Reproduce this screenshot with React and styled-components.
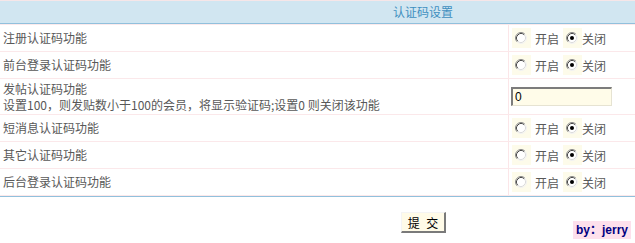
import React from 'react';
import styled, { createGlobalStyle } from 'styled-components';

const GlobalStyle = createGlobalStyle`
  body {
    margin: 0;
    background: #ffffff;
    font-family: "Noto Sans CJK SC", "Liberation Sans", sans-serif;
    font-size: 12px;
    color: #585858;
  }
`;

const Table = styled.div`
  width: 635px;
  border-top: 1px solid #f6e6e8;
`;

const Header = styled.div`
  height: 22px;
  line-height: 22px;
  background: #d1e6f1;
  border-bottom: 1px solid #91c0dc;
  color: #3f8fbf;
  padding-left: 393px;
`;

const Rows = styled.div`
  border-top: 1px solid #fbeaec;
  border-bottom: 1px solid #91c0dc;
`;

const Row = styled.div`
  display: grid;
  grid-template-columns: 508px 1fr;
  height: ${p => p.$h}px;
  border-bottom: 1px solid #fbe8ea;
`;

const Label = styled.div`
  display: flex;
  flex-direction: column;
  justify-content: center;
  padding: 0 3px;
  line-height: 16px;
  white-space: nowrap;
`;

const Control = styled.div`
  display: flex;
  align-items: center;
  border-left: 1px solid #fbe6e8;
  padding-left: 3px;
`;

const RadioBox = styled.span`
  display: inline-flex;
  align-items: center;
  width: 19px;
  height: 20px;
  padding-left: 3px;
  box-sizing: border-box;
  background: #fdfbea;
`;

const RadioText = styled.span`
  margin: 0 ${p => (p.$gap ? 4 : 0)}px 0 ${p => (p.$gap ? 4 : 0)}px;
`;

const TextInput = styled.input`
  width: 101px;
  height: 19px;
  box-sizing: border-box;
  margin-left: -1px;
  padding: 0 2px;
  background: #fffce9;
  border-top: 2px solid #7c7c7c;
  border-left: 2px solid #7c7c7c;
  border-right: 1px solid #e6e3d2;
  border-bottom: 1px solid #e6e3d2;
  font-family: "Liberation Sans", sans-serif;
  font-size: 12px;
  color: #000;
  outline: none;
`;

const Footer = styled.div`
  display: flex;
  align-items: flex-start;
  height: 46px;
  padding-top: 15px;
  box-sizing: border-box;
`;

const SubmitButton = styled.button`
  margin-left: 401px;
  width: 45px;
  height: 21px;
  padding: 0;
  background: #fffbe8;
  border-top: 1px solid #f4f4f4;
  border-left: 1px solid #f4f4f4;
  border-right: 2px solid #7a7a7a;
  border-bottom: 2px solid #7a7a7a;
  font-family: "Noto Sans CJK SC", sans-serif;
  font-size: 12px;
  color: #000;
  line-height: 17px;
  white-space: pre;
  word-spacing: 4px;
`;

const Signature = styled.div`
  margin: 9px 4px 0 auto;
  height: 18px;
  line-height: 18px;
  padding: 0 3px;
  background: #fde0ec;
  color: #000080;
  font-family: "Liberation Sans", "Noto Sans CJK SC", sans-serif;
  font-weight: bold;
  font-size: 12px;
`;

function Radio({ checked }) {
  return (
    <RadioBox>
      <svg width="12" height="12" viewBox="0 0 12 12">
        <circle cx="6" cy="6" r="5" fill="#ffffff" />
        <path d="M2.11 9.89 A5.5 5.5 0 0 1 9.89 2.11" fill="none" stroke="#8a8a8a" strokeWidth="1" />
        <path d="M9.89 2.11 A5.5 5.5 0 0 1 2.11 9.89" fill="none" stroke="#f2f2f2" strokeWidth="1" />
        <path d="M2.82 9.18 A4.5 4.5 0 0 1 9.18 2.82" fill="none" stroke="#4a4a4a" strokeWidth="1" />
        <path d="M9.18 2.82 A4.5 4.5 0 0 1 2.82 9.18" fill="none" stroke="#dcdcdc" strokeWidth="1" />
        {checked && <circle cx="6" cy="6" r="2" fill="#000" />}
      </svg>
    </RadioBox>
  );
}

function Switch() {
  return (
    <Control>
      <Radio />
      <RadioText $gap>开启</RadioText>
      <Radio checked />
      <RadioText>关闭</RadioText>
    </Control>
  );
}

const items = [
  { name: '注册认证码功能' },
  { name: '前台登录认证码功能' },
  { name: '发帖认证码功能', note: '设置100，则发贴数小于100的会员，将显示验证码;设置0 则关闭该功能', input: '0' },
  { name: '短消息认证码功能' },
  { name: '其它认证码功能' },
  { name: '后台登录认证码功能' },
];

export default function App() {
  return (
    <>
      <GlobalStyle />
      <Table>
        <Header>认证码设置</Header>
        <Rows>
          {items.map(item => (
            <Row key={item.name} $h={item.note ? 35 : 26}>
              <Label>
                <span>{item.name}</span>
                {item.note && <span>{item.note}</span>}
              </Label>
              {item.input !== undefined ? (
                <Control>
                  <TextInput defaultValue={item.input} />
                </Control>
              ) : (
                <Switch />
              )}
            </Row>
          ))}
        </Rows>
      </Table>
      <Footer>
        <SubmitButton>提 交</SubmitButton>
        <Signature>by：jerry</Signature>
      </Footer>
    </>
  );
}
